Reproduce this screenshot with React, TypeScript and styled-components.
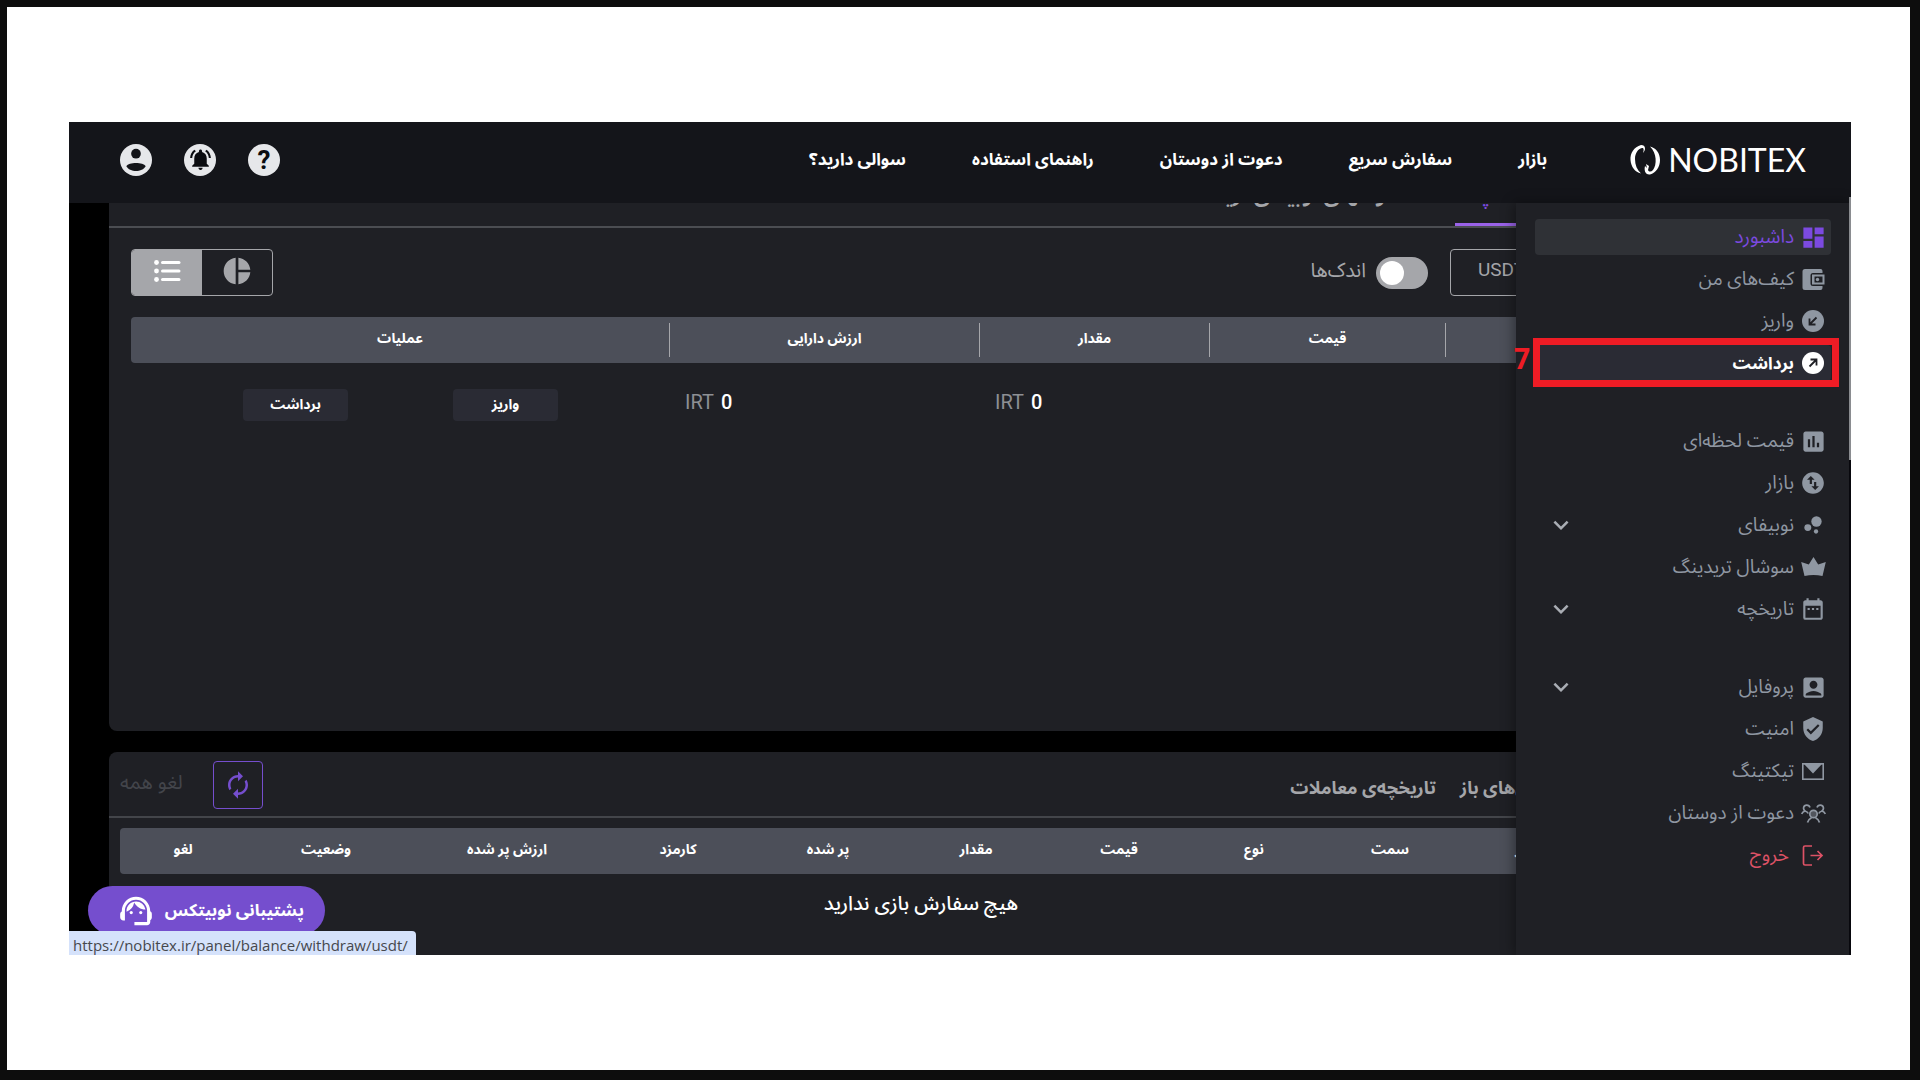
import React, { FunctionComponent, ReactNode } from "react";
import styled, { createGlobalStyle } from "styled-components";
import {
  MdAccountBox,
  MdAssessment,
  MdAutorenew,
  MdBubbleChart,
  MdDashboard,
  MdDateRange,
  MdExpandMore,
  MdNotificationsActive,
  MdPieChart,
  MdSupportAgent,
  MdSwapVerticalCircle,
  MdVerifiedUser,
} from "react-icons/md";

const GlobalStyle = createGlobalStyle`
  * {
    box-sizing: border-box;
  }
  body {
    margin: 0;
    background: #fff;
    font-family: Roboto, "Noto Sans Arabic", "DejaVu Sans", sans-serif;
  }
  button {
    font-family: inherit;
    cursor: pointer;
  }
  a {
    text-decoration: none;
    color: inherit;
  }
`;

const Slide = styled.div`
  display: flex;
  min-height: 100vh;
  padding: 115px 59px 115px 62px;
  background: #fff;
  border: solid #0d0d0d;
  border-width: 7px 10px 10px 7px;
`;

const Window = styled.div`
  position: relative;
  flex: 1;
  min-width: 0;
  display: flex;
  flex-direction: column;
  overflow: hidden;
  background: #000;
  color: #fff;
`;

const Header = styled.header`
  display: flex;
  align-items: center;
  height: 81px;
  padding: 0 45px 6px 51px;
  background: #14151a;
`;

const Logo = styled.a`
  display: flex;
  align-items: center;
  gap: 7px;
  direction: ltr;
  font-family: Lato, sans-serif;
  font-size: 32px;
  line-height: 32px;
`;

const Nav = styled.nav`
  display: flex;
  gap: 66px;
  margin-right: 83px;
  font-size: 17px;
  font-weight: 700;
`;

const HeaderActions = styled.div`
  display: flex;
  gap: 32px;
  margin-right: auto;
`;

const RoundButton = styled.button`
  display: flex;
  align-items: center;
  justify-content: center;
  width: 32px;
  height: 32px;
  padding: 0;
  border: 0;
  border-radius: 50%;
  background: #e6e7ea;
  color: #0b0c10;
  font-size: 26px;
  font-weight: 700;
`;

const Body = styled.div`
  position: relative;
  flex: 1;
  display: flex;
  flex-direction: column;
  gap: 21px;
  padding: 0 118px 0 40px;
`;

const Card = styled.section<{ $grow?: boolean }>`
  ${(p) => (p.$grow ? "flex: 1;" : "height: 203px;")}
  border-radius: ${(p) => (p.$grow ? "0 0 8px 8px" : "8px 8px 0 0")};
  background: #1f2025;
`;

const WalletTabs = styled.div`
  display: flex;
  align-items: flex-end;
  gap: 70px;
  height: 25px;
  padding-right: 174px;
  border-bottom: 2px solid #4b4d52;
  overflow: hidden;
`;

const WalletTab = styled.button<{ $active?: boolean }>`
  flex: none;
  padding: 0 0 15px;
  border: 0;
  border-bottom: 3px solid ${(p) => (p.$active ? "#9a62e8" : "transparent")};
  background: none;
  color: ${(p) => (p.$active ? "#7c4ae0" : "#a5a6aa")};
  font-size: 20px;
  font-weight: 700;
  line-height: 26px;
`;

const Toolbar = styled.div`
  display: flex;
  align-items: center;
  padding: 21px 22px;
`;

const Segments = styled.div<{ $wide?: boolean }>`
  display: flex;
  width: ${(p) => (p.$wide ? "261px" : "142px")};
  height: 47px;
  border: 1px solid #a5a6aa;
  border-radius: 4px;
  overflow: hidden;
`;

const Segment = styled.button<{ $active?: boolean; $fit?: boolean }>`
  flex: ${(p) => (p.$fit ? "none" : 1)};
  display: flex;
  align-items: center;
  justify-content: center;
  padding: ${(p) => (p.$fit ? "0 27px 6px" : "0 0 3px")};
  border: 0;
  background: ${(p) => (p.$active ? "#a5a6aa" : "none")};
  color: ${(p) => (p.$active ? "#fff" : "#a5a6aa")};
  font-size: 19px;
`;

const SwitchLabel = styled.label`
  display: flex;
  align-items: center;
  gap: 10px;
  margin: 0 22px 0 auto;
  color: #a5a6aa;
  font-size: 20px;
  line-height: 32px;
`;

const SwitchText = styled.span`
  padding-bottom: 6px;
`;

const Switch = styled.input`
  appearance: none;
  width: 52px;
  height: 32px;
  margin: 0;
  padding: 4px;
  border-radius: 16px;
  background: #a5a6aa;
  direction: ltr;

  &::before {
    content: "";
    display: block;
    width: 24px;
    height: 24px;
    border-radius: 50%;
    background: #fff;
  }
`;

const TableWrap = styled.div<{ $pad: number }>`
  padding: 0 ${(p) => p.$pad}px;
`;

const Table = styled.table`
  width: 100%;
  table-layout: fixed;
  border-collapse: separate;
  border-spacing: 0;
`;

const Th = styled.th<{ $w: number }>`
  width: ${(p) => p.$w}px;
  height: 46px;
  padding: 0;
  background: #4c4f59;
  font-size: 14px;
  font-weight: 700;

  &:first-child {
    border-radius: 0 4px 4px 0;
  }
  &:last-child {
    border-radius: 4px 0 0 4px;
  }
`;

const ThLabel = styled.span<{ $line?: boolean }>`
  display: block;
  padding-bottom: 4px;
  line-height: 30px;
  border-right: ${(p) => (p.$line ? "1px solid #a5a6aa" : "0")};
`;

const Td = styled.td<{ $actions?: boolean }>`
  height: 83px;
  padding: ${(p) => (p.$actions ? "0 15px" : "0 15px 6px")};
  direction: ltr;
  font-size: 20px;
  font-weight: 500;
`;

const Unit = styled.span`
  margin-right: 2px;
  color: #8d8f94;
  font-weight: 400;
`;

const RowActions = styled.div`
  display: flex;
  justify-content: center;
  gap: 105px;
`;

const RowButton = styled.button`
  width: 105px;
  height: 32px;
  padding: 0;
  border: 0;
  border-radius: 4px;
  background: #2a2b34;
  color: #fff;
  font-size: 14px;
  font-weight: 700;
`;

const OrdersHead = styled.div`
  display: flex;
  align-items: center;
  height: 66px;
  margin-bottom: 10px;
  padding: 2px 154px 0 11px;
  border-bottom: 2px solid #43454a;
`;

const OrdersTab = styled.button`
  margin-left: 24px;
  padding: 6px 0 0;
  border: 0;
  background: none;
  color: #a5a6aa;
  font-size: 18px;
  font-weight: 700;
`;

const RefreshButton = styled.button`
  display: flex;
  align-items: center;
  justify-content: center;
  width: 50px;
  height: 48px;
  margin: 0 auto 0 30px;
  padding: 0;
  border: 1px solid #754ece;
  border-radius: 4px;
  background: none;
  color: #754ece;
`;

const CancelAll = styled.button`
  padding: 0 0 4px;
  border: 0;
  background: none;
  color: #43454b;
  font-size: 20px;
`;

const Empty = styled.p`
  margin: 16px 0 0;
  text-align: center;
  font-size: 20px;
  font-weight: 500;
  line-height: 26px;
`;

const Sidebar = styled.aside`
  position: absolute;
  top: 81px;
  bottom: 0;
  right: 0;
  width: 335px;
  padding: 16px 18px 16px 19px;
  border-right: 2px solid #08080d;
  background: #1f2025;
  box-shadow: -2px 0 12px rgba(0, 0, 0, 0.4);
`;

const ScrollThumb = styled.div`
  position: absolute;
  top: 75px;
  right: 0;
  width: 2px;
  height: 263px;
  background: #8a8c90;
`;

const MenuGroup = styled.ul`
  display: flex;
  flex-direction: column;
  gap: 6px;
  margin: 0 0 42px;
  padding: 0;
  list-style: none;
`;

const MenuItem = styled.li`
  position: relative;
`;

const MenuLink = styled.a<{ $tone?: string }>`
  display: flex;
  align-items: center;
  gap: ${(p) => (p.$tone === "danger" ? "12px" : "7px")};
  height: 36px;
  padding: 0 6px 0 11px;
  border-radius: 4px;
  font-size: ${(p) => (p.$tone === "hover" ? "17px" : "19px")};
  line-height: 30px;
  color: ${(p) =>
    p.$tone === "active"
      ? "#7c4ae0"
      : p.$tone === "hover"
      ? "#fff"
      : p.$tone === "danger"
      ? "#dd5266"
      : "#8f97a2"};
  background: ${(p) =>
    p.$tone === "active"
      ? "#2f3136"
      : p.$tone === "hover"
      ? "#2a2b34"
      : "none"};
  font-weight: ${(p) => (p.$tone === "hover" ? 700 : 400)};
`;

const IconSlot = styled.span`
  display: flex;
  align-items: center;
  justify-content: center;
  width: 24px;

  svg {
    flex: none;
  }
`;

const Chevron = styled(MdExpandMore)`
  margin-right: auto;
  color: #a9adb4;
`;

const StepFrame = styled.div`
  position: absolute;
  top: -7px;
  right: -8px;
  bottom: -6px;
  left: -2px;
  border: 7px solid #ee1c25;
  pointer-events: none;
`;

const StepNumber = styled.span`
  position: absolute;
  right: 100%;
  top: 0;
  margin-right: 10px;
  color: #ee1c25;
  font-family: "Open Sans", sans-serif;
  font-size: 28px;
  font-weight: 700;
  line-height: 26px;
`;

const Support = styled.button`
  position: absolute;
  left: 19px;
  bottom: 20px;
  display: flex;
  align-items: center;
  gap: 10px;
  width: 237px;
  height: 49px;
  padding: 0 21px;
  border: 0;
  border-radius: 25px;
  background: #754ece;
  color: #fff;
  font-size: 17px;
  font-weight: 700;
  white-space: nowrap;
`;

const StatusBar = styled.div`
  position: absolute;
  left: 0;
  bottom: 0;
  height: 24px;
  padding: 0 8px 0 4px;
  border-radius: 0 4px 0 0;
  background: #d5e2fb;
  color: #46484d;
  direction: ltr;
  font-family: "Open Sans", sans-serif;
  font-size: 15px;
  line-height: 28px;
`;

const LogoMark = () => (
  <svg width="31" height="30" viewBox="0 0 31 30" fill="#fff">
    <path d="M11 0C4 2 0 8 0.500 15C1 22 5 27 11 28.500C7 25 5 20 5 14C5 8 8 4 12 3C14 3 14 5 13 8C16 5 16 0 11 0Z" />
    <path d="M20 1.500C26 3 30 8 30 15C30 22 26 28 20 29.500C15 30 14 25 15 21L17 23L16 19L19 21L18 25C19 27 21 27 23 25C27 20 27 8 20 1.500Z" />
  </svg>
);

const UserGlyph = () => (
  <svg width="32" height="32" viewBox="0 0 33 33" fill="#14151a">
    <circle cx="16.500" cy="10" r="5" />
    <path d="M6.500 23C9 18.500 24 18.500 26.500 23C23 29.500 10 29.500 6.500 23Z" />
  </svg>
);

const ListGlyph = () => (
  <svg width="27" height="22" viewBox="0 0 27 22" fill="#fff">
    {[2.5, 11, 19.5].map((y) => (
      <g key={y}>
        <circle cx="2.500" cy={y} r="2.400" />
        <rect x="7" y={y - 1.5} width="19.500" height="3" rx="1.500" />
      </g>
    ))}
  </svg>
);

const WalletGlyph = () => (
  <svg width="23" height="21" viewBox="0 0 23 21">
    <path
      fill="currentColor"
      d="M3 0H18.500Q20.500 0 20.500 2V4H11Q8.500 4 8.500 6.500V14.500Q8.500 17 11 17H20.500V19Q20.500 21 18.500 21H3Q0.500 21 0.500 18.500V2.500Q0.500 0 3 0Z"
    />
    <path
      fill="currentColor"
      fillRule="evenodd"
      d="M10 5.500H22.500V15.500H10ZM12.500 7.500V13.500H20.500V7.500Z"
    />
    <circle cx="15.500" cy="10.500" r="1.700" fill="currentColor" />
  </svg>
);

const ArrowGlyph: FunctionComponent<{ up?: boolean }> = ({ up }) => (
  <svg width="22" height="22" viewBox="0 0 22 22">
    <circle cx="11" cy="11" r="11" fill="currentColor" />
    <path
      d={up ? "M7.500 14.500L14 8M8.500 7.500H14.500V13.500" : "M14.500 7.500L8 14M7.500 8.500V14.500H13.500"}
      fill="none"
      stroke="#1f2025"
      strokeWidth="1.800"
    />
  </svg>
);

const CrownGlyph = () => (
  <svg width="25" height="20" viewBox="0 0 25 20" fill="currentColor">
    <path d="M12.500 0L17.200 7.500L24.800 5L21.500 19Q12.500 17 3.500 19L0.200 5L7.800 7.500Z" />
  </svg>
);

const MailGlyph = () => (
  <svg width="22" height="17" viewBox="0 0 22 17">
    <rect x="0.800" y="0.800" width="20.400" height="15.400" fill="none" stroke="currentColor" strokeWidth="1.600" />
    <path d="M2 1H20L11 10.500Z" fill="currentColor" />
  </svg>
);

const FriendsGlyph = () => (
  <svg width="25" height="19" viewBox="0 0 25 19" fill="none" stroke="currentColor" strokeWidth="1.700">
    <circle cx="12.500" cy="10" r="3.700" fill="#51555d" />
    <path d="M6.500 18.500C7 16.500 8.500 14.800 10.500 13.800M18.500 18.500C18 16.500 16.500 14.800 14.500 13.800" />
    <path d="M9 3.500C8 0.500 3.500 0.300 2.700 3.300C2.300 5 3 6.300 4 7C2.500 7.500 1.200 8.600 0.700 10M4 7C5.500 7.500 6.700 8.300 7.200 9.500" />
    <path d="M16 3.500C17 0.500 21.500 0.300 22.300 3.300C22.700 5 22 6.300 21 7C22.500 7.500 23.800 8.600 24.300 10M21 7C19.500 7.500 18.300 8.300 17.800 9.500" />
  </svg>
);

const ExitGlyph = () => (
  <svg width="22" height="21" viewBox="0 0 22 21" fill="none" stroke="currentColor" strokeWidth="1.700">
    <path d="M10 1H3Q1.500 1 1.500 2.500V18.500Q1.500 20 3 20H10M8.500 10.500H20M15.500 6L20 10.500L15.500 15" />
  </svg>
);

type Entry = {
  label: string;
  icon: ReactNode;
  tone?: string;
  expandable?: boolean;
  step?: number;
};

const menu: Entry[][] = [
  [
    { label: "داشبورد", icon: <MdDashboard size={27} />, tone: "active" },
    { label: "کیف‌های من", icon: <WalletGlyph /> },
    { label: "واریز", icon: <ArrowGlyph /> },
    { label: "برداشت", icon: <ArrowGlyph up />, tone: "hover", step: 7 },
  ],
  [
    { label: "قیمت لحظه‌ای", icon: <MdAssessment size={27} /> },
    { label: "بازار", icon: <MdSwapVerticalCircle size={26} /> },
    { label: "نوبیفای", icon: <MdBubbleChart size={26} />, expandable: true },
    { label: "سوشال تریدینگ", icon: <CrownGlyph /> },
    { label: "تاریخچه", icon: <MdDateRange size={26} />, expandable: true },
  ],
  [
    { label: "پروفایل", icon: <MdAccountBox size={27} />, expandable: true },
    { label: "امنیت", icon: <MdVerifiedUser size={26} /> },
    { label: "تیکتینگ", icon: <MailGlyph /> },
    { label: "دعوت از دوستان", icon: <FriendsGlyph /> },
    { label: "خروج", icon: <ExitGlyph />, tone: "danger" },
  ],
];

const navLinks = [
  "بازار",
  "سفارش سریع",
  "دعوت از دوستان",
  "راهنمای استفاده",
  "سوالی دارید؟",
];

const assetColumns = [
  { title: "ارز", width: 265 },
  { title: "قیمت", width: 236 },
  { title: "مقدار", width: 230 },
  { title: "ارزش دارایی", width: 310 },
  { title: "عملیات", width: 539 },
];

const orderColumns = [
  { title: "تاریخ", width: 134 },
  { title: "بازار", width: 122 },
  { title: "سمت", width: 152 },
  { title: "نوع", width: 120 },
  { title: "قیمت", width: 150 },
  { title: "مقدار", width: 136 },
  { title: "پر شده", width: 160 },
  { title: "کارمزد", width: 140 },
  { title: "ارزش پر شده", width: 202 },
  { title: "وضعیت", width: 160 },
  { title: "لغو", width: 126 },
];

const App: FunctionComponent = () => {
  return (
    <Slide>
      <GlobalStyle />
      <Window dir="rtl">
        <Header>
          <Logo href="#">
            <LogoMark />
            NOBITEX
          </Logo>
          <Nav>
            {navLinks.map((link) => (
              <a href="#" key={link}>
                {link}
              </a>
            ))}
          </Nav>
          <HeaderActions>
            <RoundButton aria-label="راهنما">?</RoundButton>
            <RoundButton aria-label="اعلان‌ها">
              <MdNotificationsActive size={25} />
            </RoundButton>
            <RoundButton aria-label="حساب کاربری">
              <UserGlyph />
            </RoundButton>
          </HeaderActions>
        </Header>

        <Body>
          <Card $grow>
            <WalletTabs>
              <WalletTab $active>کیف اسپات</WalletTab>
              <WalletTab>وامهای نوبیفای ترید</WalletTab>
            </WalletTabs>
            <Toolbar>
              <Segments $wide>
                <Segment>تومان</Segment>
                <Segment $fit>USDT</Segment>
              </Segments>
              <SwitchLabel>
                <Switch type="checkbox" role="switch" />
                <SwitchText>اندک‌ها</SwitchText>
              </SwitchLabel>
              <Segments>
                <Segment aria-label="نمودار">
                  <MdPieChart size={32} />
                </Segment>
                <Segment $active aria-label="فهرست">
                  <ListGlyph />
                </Segment>
              </Segments>
            </Toolbar>
            <TableWrap $pad={22}>
              <Table>
                <thead>
                  <tr>
                    {assetColumns.map((col, i) => (
                      <Th $w={col.width} key={col.title}>
                        <ThLabel $line={i > 0}>{col.title}</ThLabel>
                      </Th>
                    ))}
                  </tr>
                </thead>
                <tbody>
                  <tr>
                    <Td />
                    <Td />
                    <Td>
                      <Unit>IRT</Unit> 0
                    </Td>
                    <Td>
                      <Unit>IRT</Unit> 0
                    </Td>
                    <Td $actions>
                      <RowActions>
                        <RowButton>برداشت</RowButton>
                        <RowButton>واریز</RowButton>
                      </RowActions>
                    </Td>
                  </tr>
                </tbody>
              </Table>
            </TableWrap>
          </Card>

          <Card>
            <OrdersHead>
              <OrdersTab>سفارش‌های باز</OrdersTab>
              <OrdersTab>تاریخچه‌ی معاملات</OrdersTab>
              <RefreshButton aria-label="بروزرسانی">
                <MdAutorenew size={30} />
              </RefreshButton>
              <CancelAll disabled>لغو همه</CancelAll>
            </OrdersHead>
            <TableWrap $pad={11}>
              <Table>
                <thead>
                  <tr>
                    {orderColumns.map((col) => (
                      <Th $w={col.width} key={col.title}>
                        <ThLabel>{col.title}</ThLabel>
                      </Th>
                    ))}
                  </tr>
                </thead>
              </Table>
            </TableWrap>
            <Empty>هیچ سفارش بازی ندارید</Empty>
          </Card>
        </Body>

        <Sidebar>
          {menu.map((group, i) => (
            <MenuGroup key={i}>
              {group.map((item) => (
                <MenuItem key={item.label}>
                  <MenuLink href="#" $tone={item.tone}>
                    <IconSlot>{item.icon}</IconSlot>
                    {item.label}
                    {item.expandable && <Chevron size={30} />}
                  </MenuLink>
                  {item.step && (
                    <StepFrame>
                      <StepNumber>{item.step}</StepNumber>
                    </StepFrame>
                  )}
                </MenuItem>
              ))}
            </MenuGroup>
          ))}
        </Sidebar>
        <ScrollThumb />

        <Support>
          پشتیبانی نوبیتکس
          <MdSupportAgent size={38} />
        </Support>
        <StatusBar>https://nobitex.ir/panel/balance/withdraw/usdt/</StatusBar>
      </Window>
    </Slide>
  );
};

export default App;
